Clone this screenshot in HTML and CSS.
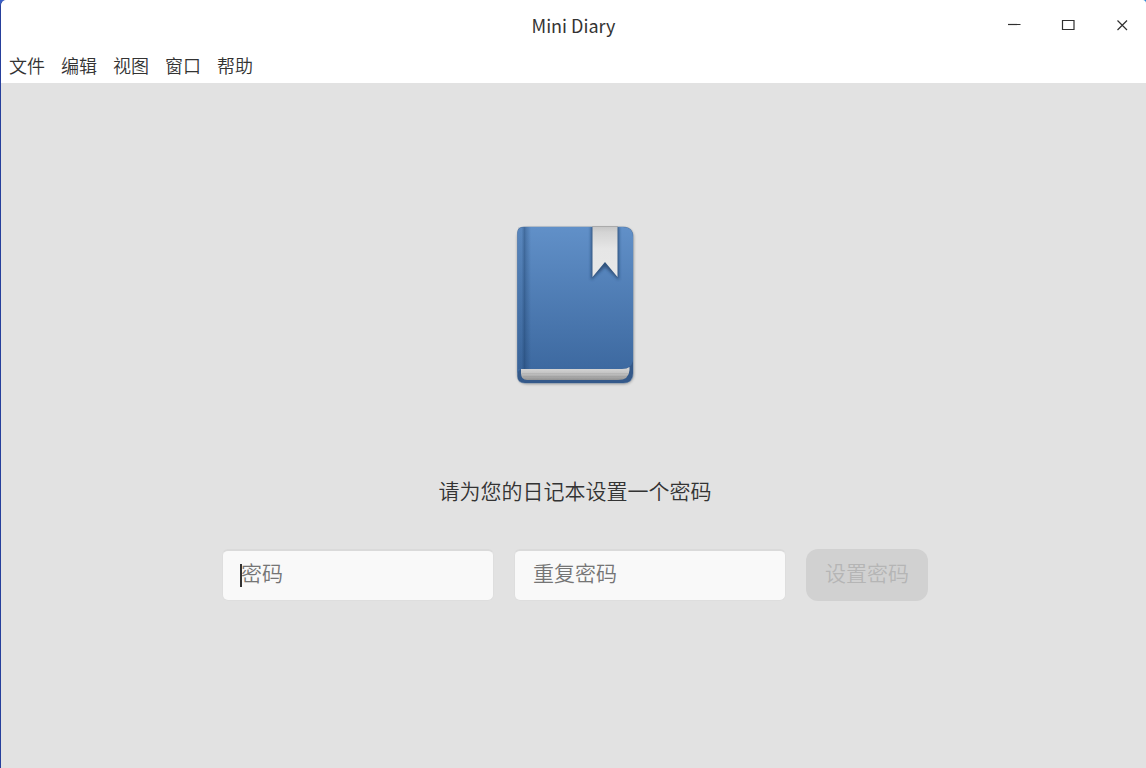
FILE: index.html
```html
<!DOCTYPE html>
<html lang="zh-CN">
<head>
<meta charset="utf-8">
<title>Mini Diary</title>
<link rel="stylesheet" href="styles.css">
</head>
<body>
<div class="window">
  <header class="titlebar">
    <h1 class="title">Mini Diary</h1>
    <div class="controls">
      <button class="control" type="button" aria-label="最小化"><svg width="14" height="14" viewBox="0 0 14 14"><path d="M1 6.500h12.500"/></svg></button>
      <button class="control" type="button" aria-label="最大化"><svg width="14" height="14" viewBox="0 0 14 14"><path d="M1.500 2.500h11.500v9h-11.500z"/></svg></button>
      <button class="control" type="button" aria-label="关闭"><svg width="14" height="14" viewBox="0 0 14 14"><path d="M2.500 2.500l9.500 9.500M12 2.500l-9.500 9.500"/></svg></button>
    </div>
  </header>
  <nav class="menubar">
    <button class="menu" type="button">文件</button>
    <button class="menu" type="button">编辑</button>
    <button class="menu" type="button">视图</button>
    <button class="menu" type="button">窗口</button>
    <button class="menu" type="button">帮助</button>
  </nav>
  <main class="content">
    <svg class="logo" width="200" height="200" viewBox="475 205 200 200" aria-hidden="true">
      <defs>
        <linearGradient id="cover" x1="0" y1="0" x2="0" y2="1"><stop offset="0" stop-color="#6190c8"/><stop offset="1" stop-color="#3c689f"/></linearGradient>
        <linearGradient id="spine" x1="0" y1="0" x2="1" y2="0"><stop offset="0" stop-color="#14365f" stop-opacity=".1"/><stop offset=".28" stop-color="#14365f" stop-opacity=".1"/><stop offset=".5" stop-color="#14365f" stop-opacity=".4"/><stop offset=".62" stop-color="#14365f" stop-opacity=".26"/><stop offset="1" stop-color="#14365f" stop-opacity="0"/></linearGradient>
        <linearGradient id="pages" x1="0" y1="0" x2="0" y2="1"><stop offset="0" stop-color="#dadada"/><stop offset=".5" stop-color="#c2c2c2"/><stop offset="1" stop-color="#929292"/></linearGradient>
        <linearGradient id="ribbon" x1="0" y1="0" x2="0" y2="1"><stop offset="0" stop-color="#c4c4c4"/><stop offset=".12" stop-color="#d4d4d4"/><stop offset=".45" stop-color="#e6e6e6"/><stop offset="1" stop-color="#e8e8e8"/></linearGradient>
        <filter id="soft" x="-20%" y="-20%" width="140%" height="140%"><feGaussianBlur stdDeviation="1.500"/></filter>
        <clipPath id="body"><rect x="517" y="227" width="116" height="156" rx="8"/></clipPath>
      </defs>
      <rect x="517.500" y="228" width="116" height="156" rx="9" fill="#000" opacity=".36" filter="url(#soft)"/>
      <path d="M524 226.500H623Q633.500 226.500 633.500 237V373Q633.500 383.500 623 383.500H525Q517 383.500 517 376V233Q517 226.500 524 226.500Z" fill="#8c9fb5"/>
      <path d="M524 227H623Q633 227 633 237V373Q633 383 623 383H525Q517.500 383 517.500 376V233Q517.500 227 524 227Z" fill="#34598a"/>
      <path d="M524 227H623Q633 227 633 237V361Q631 369 621 369H524Q519 369 517.500 373V233Q517.500 227 524 227Z" fill="url(#cover)"/>
      <rect x="518" y="227" width="13" height="142" fill="url(#spine)"/>
      <path d="M521 369H622Q627 369 629.500 367V370Q629 380 618 380H527Q521 380 521 373Z" fill="url(#pages)"/>
      <path d="M522 373.500H629M523 376.500H627" fill="none" stroke="#888" stroke-opacity=".25" stroke-width=".8"/>
      <g clip-path="url(#body)"><path d="M591 226H619V280L605 267L591 280Z" fill="#163052" opacity=".6" filter="url(#soft)"/></g>
      <path d="M592.500 226H617.500V277L605 262L592.500 277Z" fill="url(#ribbon)"/>
      <path d="M592 226.500H618" stroke="#aaa"/>
    </svg>
    <p class="prompt">请为您的日记本设置一个密码</p>
    <form class="form">
      <div class="field">
        <input class="password" type="password" placeholder="密码" aria-label="密码">
        <span class="caret"></span>
      </div>
      <div class="field">
        <input class="password" type="password" placeholder="重复密码" aria-label="重复密码">
      </div>
      <button class="submit" type="submit" disabled>设置密码</button>
    </form>
  </main>
</div>
</body>
</html>
```
FILE: styles.css
```css
* {
  box-sizing: border-box;
}

body {
  margin: 0;
  background: linear-gradient(90deg, #3a60c8, #2a8ad8);
  color: #333;
  font-family: "Noto Sans CJK SC", sans-serif;
}

button,
input {
  font-family: inherit;
}

.window {
  display: flex;
  flex-direction: column;
  min-height: 100vh;
  border-left: 1px solid #263f9c;
  border-radius: 6px 4px 0 0;
  background: #e2e2e2;
  overflow: hidden;
}

.titlebar {
  display: grid;
  grid-template-columns: 1fr auto 1fr;
  align-items: center;
  height: 50px;
  background: #fff;
}

.title {
  grid-column: 2;
  margin: 0;
  font-size: 18px;
  font-weight: 400;
  line-height: 26px;
}

.controls {
  display: flex;
  justify-content: flex-end;
  gap: 24px;
  padding-right: 9px;
}

.control {
  display: flex;
  align-items: center;
  justify-content: center;
  width: 30px;
  height: 30px;
  padding: 0;
  border: 0;
  background: none;
}

.control svg {
  fill: none;
  stroke: #303030;
  stroke-width: 1.2;
}

.menubar {
  display: flex;
  height: 33px;
  background: #fff;
}

.menu {
  padding: 0 8px 4px;
  border: 0;
  background: none;
  color: #333;
  font-size: 18px;
  font-weight: 350;
  line-height: 28px;
}

.content {
  flex: 1;
  display: flex;
  flex-direction: column;
  align-items: center;
  justify-content: center;
  padding: 0 0 45px 3px;
  font-weight: 350;
}

.logo {
  display: block;
}

.prompt {
  margin: 70px 0 44px;
  font-size: 21px;
  line-height: 30px;
}

.form {
  display: flex;
  gap: 20px;
}

.field {
  position: relative;
  width: 272px;
}

.password {
  width: 100%;
  height: 52px;
  padding: 0 18px 8px;
  border: 1px solid #dedede;
  border-top: 2px solid #dadada;
  border-radius: 6px;
  outline: 0;
  background: #f9f9f9;
  color: #333;
  font-size: 21px;
  font-weight: inherit;
}

.password::placeholder {
  color: #757575;
}

.caret {
  position: absolute;
  left: 18px;
  top: 15px;
  width: 2px;
  height: 23px;
  background: #333;
}

.submit {
  width: 122px;
  height: 52px;
  padding: 0 0 6px;
  border: 0;
  border-radius: 12px;
  background: #d1d1d1;
  color: #b5b5b5;
  font-size: 21px;
  font-weight: inherit;
}
```
